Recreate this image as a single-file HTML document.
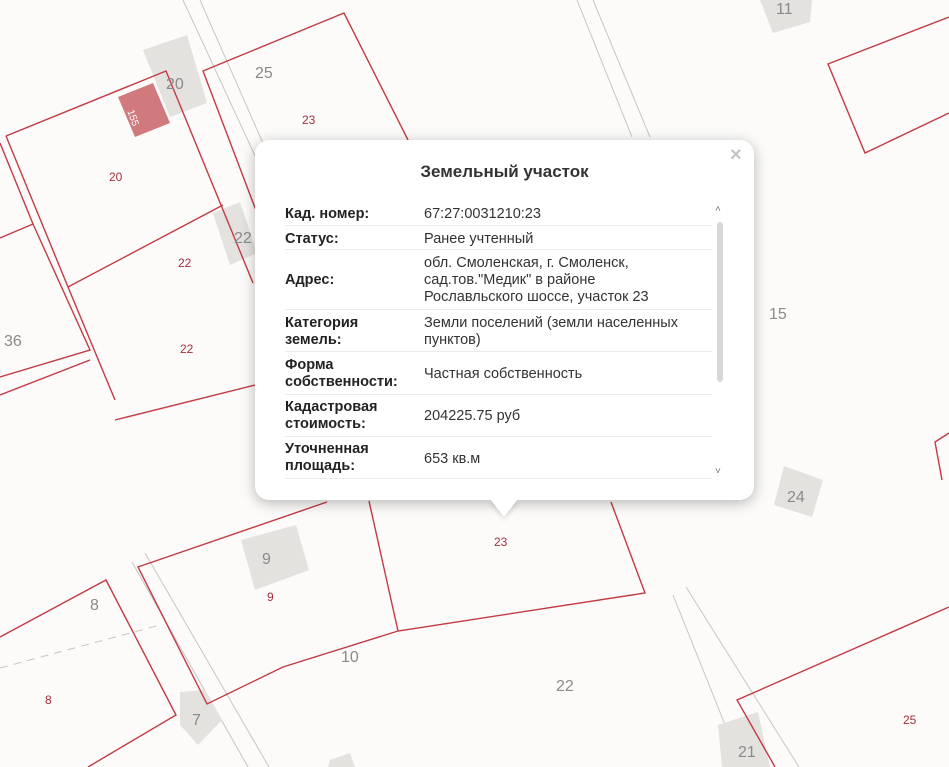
<!DOCTYPE html>
<html><head><meta charset="utf-8"><style>
html,body{margin:0;padding:0;width:949px;height:767px;overflow:hidden;background:#fcfbf9;font-family:"Liberation Sans",sans-serif}
svg{position:absolute;left:0;top:0}
.pop{position:absolute;left:255px;top:140px;width:499px;height:360px;background:#fff;border-radius:14px;box-shadow:0 3px 14px rgba(0,0,0,0.28)}
.tail{position:absolute;left:490px;top:499px;width:0;height:0;border-left:14px solid transparent;border-right:14px solid transparent;border-top:18px solid #fff;z-index:5;filter:drop-shadow(0 3px 2px rgba(0,0,0,0.12))}
.title{position:absolute;left:0;width:499px;top:22px;text-align:center;font-weight:bold;font-size:17px;color:#333}
.x{position:absolute;left:475px;top:4px;font-size:20px;color:#c4c4c4;font-weight:bold}
.row{position:absolute;left:30px;width:427px;font-size:14.5px;color:#333;line-height:17px}
.row b{position:absolute;left:0;width:112px;color:#222}
.row span{position:absolute;left:139px;width:275px}
.ln{position:absolute;left:30px;width:427px;height:1px;background:#ececec}
.sb{position:absolute;left:462px;top:82px;width:6px;height:160px;background:#d8d8d8;border-radius:3px}
.ar{position:absolute;left:460px;font-size:10px;color:#777}
</style></head><body>
<svg width="949" height="767" viewBox="0 0 949 767">
<g stroke="#c8c6c3" stroke-width="1" fill="none">
<line x1="183" y1="0" x2="257" y2="160"/><line x1="200" y1="0" x2="266" y2="150"/>
<line x1="577" y1="0" x2="632" y2="137"/><line x1="593" y1="0" x2="650" y2="137"/>
<line x1="132" y1="562" x2="248" y2="767"/><line x1="145" y1="553" x2="269" y2="767"/>
<line x1="673" y1="595" x2="742" y2="767"/><line x1="686" y1="587" x2="799" y2="767"/>
<line x1="0" y1="668" x2="160" y2="625" stroke-dasharray="8,6"/>
</g>
<g fill="#e3e2df">
<polygon points="143,50 187,35 207,103 170,117"/>
<polygon points="213,213 240,202 257,253 230,265"/>
<polygon points="241,540 296,525 309,570 255,590"/>
<polygon points="760,0 812,0 810,22 773,33"/>
<polygon points="784,466 823,480 812,517 774,505"/>
<polygon points="180,692 205,690 222,720 198,745 180,725"/>
<polygon points="718,725 758,712 770,767 722,767"/>
<polygon points="330,760 350,753 355,767 328,767"/>
</g>
<polygon points="118,97 153,83 170,123 135,137" fill="#d17a7e"/>
<g stroke="#c23b44" stroke-width="1.4" fill="none">
<polyline points="6,136 166,71 253,283"/>
<line x1="6" y1="136" x2="68" y2="287"/>
<line x1="0" y1="143" x2="33" y2="224"/>
<polyline points="0,238 33,224 90,350 0,377"/>
<line x1="68" y1="287" x2="223" y2="205"/>
<line x1="68" y1="287" x2="115" y2="400"/>
<line x1="0" y1="395" x2="90" y2="360"/>
<line x1="115" y1="420" x2="255" y2="385"/>
<polyline points="257,213 203,71 344,13 408,140"/>
<polyline points="949,17 828,64 865,153 949,113"/>
<polyline points="949,433 935,442 942,480"/>
<polyline points="327,502 138,567 207,704 283,667 398,631 645,593 611,502"/>
<line x1="369" y1="501" x2="398" y2="631"/>
<polyline points="0,637 106,580 176,715 88,767"/>
<polyline points="949,607 737,700 775,767"/>
</g>
<g font-family="Liberation Sans,sans-serif" fill="#8a8a8a" font-size="16">
<text x="255" y="78">25</text><text x="166" y="89">20</text><text x="234" y="243">22</text>
<text x="4" y="346">36</text><text x="769" y="319">15</text><text x="776" y="14">11</text>
<text x="787" y="502">24</text><text x="262" y="564">9</text><text x="90" y="610">8</text>
<text x="341" y="662">10</text><text x="556" y="691">22</text><text x="192" y="725">7</text><text x="738" y="757">21</text>
</g>
<g font-family="Liberation Sans,sans-serif" fill="#a3303c" font-size="12">
<text x="302" y="124">23</text><text x="109" y="181">20</text><text x="178" y="267">22</text>
<text x="180" y="353">22</text><text x="494" y="546">23</text><text x="267" y="601">9</text>
<text x="45" y="704">8</text><text x="903" y="724">25</text>
<text x="128" y="120" font-size="10" fill="#fff" transform="rotate(70 134 115)">155</text>
</g>
</svg>
<div class="pop">
<div class="x">×</div>
<div class="title">Земельный участок</div>
<div class="row" style="top:66px"><b>Кад. номер:</b><span>67:27:0031210:23</span></div>
<div class="ln" style="top:85px"></div>
<div class="row" style="top:91px"><b>Статус:</b><span>Ранее учтенный</span></div>
<div class="ln" style="top:109px"></div>
<div class="row" style="top:115px"><b style="top:17px">Адрес:</b><span>обл. Смоленская, г. Смоленск,<br>сад.тов."Медик" в районе<br>Рославльского шоссе, участок 23</span></div>
<div class="ln" style="top:169px"></div>
<div class="row" style="top:175px"><b>Категория<br>земель:</b><span>Земли поселений (земли населенных<br>пунктов)</span></div>
<div class="ln" style="top:211px"></div>
<div class="row" style="top:217px"><b>Форма<br>собственности:</b><span style="top:9px">Частная собственность</span></div>
<div class="ln" style="top:254px"></div>
<div class="row" style="top:259px"><b>Кадастровая<br>стоимость:</b><span style="top:9px">204225.75 руб</span></div>
<div class="ln" style="top:296px"></div>
<div class="row" style="top:301px"><b>Уточненная<br>площадь:</b><span style="top:10px">653 кв.м</span></div>
<div class="ln" style="top:338px"></div>
<div class="sb"></div>
<div class="ar" style="top:64px">˄</div>
<div class="ar" style="top:326px">˅</div>
</div>
<div class="tail"></div>
</body></html>
